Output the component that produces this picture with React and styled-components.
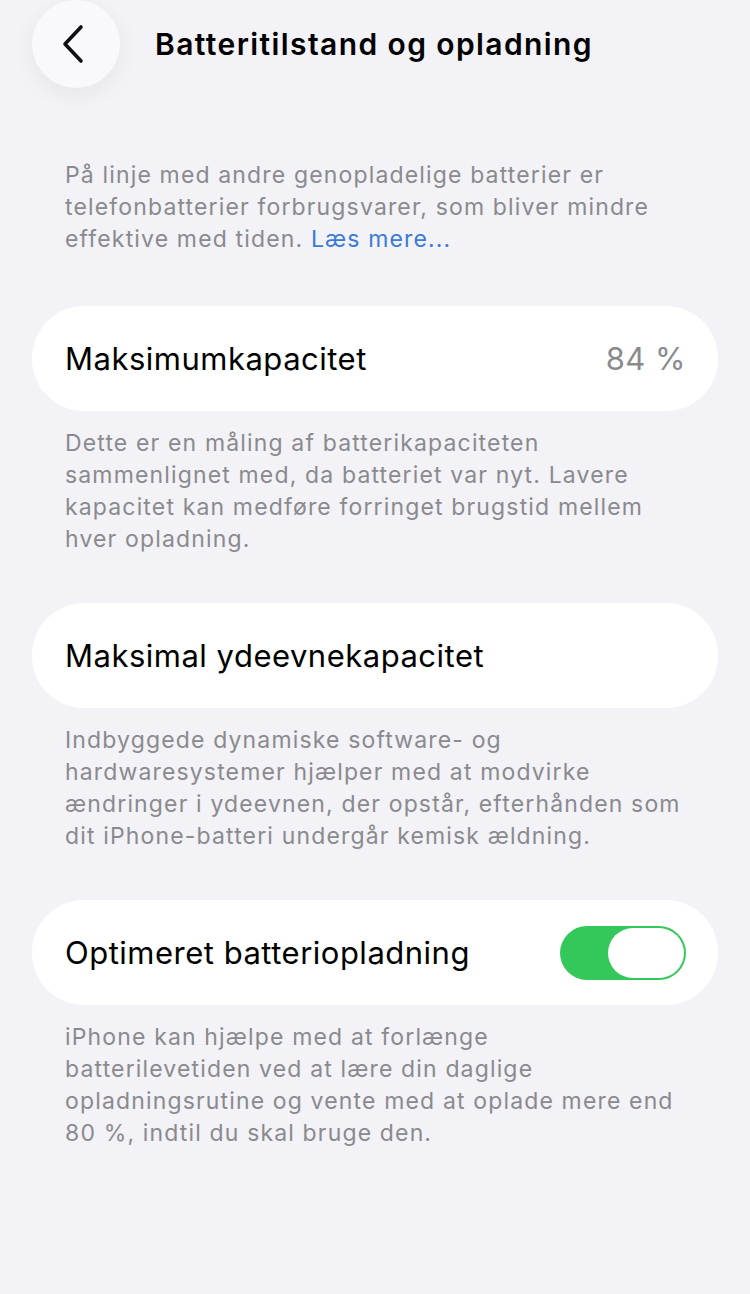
import React from "react";
import styled, { createGlobalStyle } from "styled-components";

const Global = createGlobalStyle`
  html, body { margin: 0; padding: 0; background: #f2f2f7; }
  body { font-family: Inter, "Noto Sans", sans-serif; -webkit-font-smoothing: antialiased; }
`;

const Page = styled.div`
  width: 750px;
  min-height: 1294px;
  background: #f2f2f7;
`;

const Header = styled.header`
  display: flex;
  align-items: center;
  height: 88px;
  padding-left: 32px;
  gap: 35px;
`;

const BackButton = styled.button`
  width: 88px;
  height: 88px;
  border-radius: 50%;
  border: none;
  background: #f9f9fb;
  box-shadow: 0 6px 24px rgba(0, 0, 0, 0.06);
  display: flex;
  align-items: center;
  justify-content: center;
  padding: 0;
`;

const Title = styled.h1`
  margin: 0;
  font-size: 30px;
  font-weight: 600;
  color: #000;
  letter-spacing: 1.4px;
`;

const Content = styled.main`
  display: flex;
  flex-direction: column;
  padding: 71px 32px 0;
`;

const Note = styled.p`
  margin: ${(p) => (p.$footer ? "16px 0 48px" : "0 0 51px")};
  padding: 0 37px 0 33px;
  font-size: 23px;
  line-height: 32px;
  color: #8a8a8e;
  letter-spacing: 1.15px;
`;

const Link = styled.a`
  color: #3a7bd5;
  text-decoration: none;
`;

const Card = styled.div`
  height: 105px;
  border-radius: 52px;
  background: #fff;
  display: flex;
  align-items: center;
  justify-content: space-between;
  padding: 0 32px 0 33px;
`;

const Label = styled.span`
  font-size: 31px;
  color: #000;
  letter-spacing: 0.5px;
`;

const Value = styled.span`
  font-size: 31px;
  color: #8a8a8e;
  letter-spacing: 0.5px;
`;

const Toggle = styled.div`
  width: 126px;
  height: 54px;
  border-radius: 27px;
  background: #34c759;
  display: flex;
  align-items: center;
  justify-content: flex-end;
  padding: 0 2px;
  box-sizing: border-box;
`;

const Knob = styled.div`
  width: 76px;
  height: 50px;
  border-radius: 25px;
  background: #fff;
`;

export default function App() {
  return (
    <Page>
      <Global />
      <Header>
        <BackButton aria-label="Tilbage">
          <svg width="30" height="40" viewBox="0 0 30 40">
            <path d="M20 3 L4 20 L20 37" fill="none" stroke="#111" strokeWidth="3.6" strokeLinecap="round" strokeLinejoin="round" />
          </svg>
        </BackButton>
        <Title>Batteritilstand og opladning</Title>
      </Header>
      <Content>
        <Note>
          På linje med andre genopladelige batterier er telefonbatterier forbrugsvarer, som bliver mindre effektive med tiden. <Link href="#">Læs mere...</Link>
        </Note>
        <Card>
          <Label>Maksimumkapacitet</Label>
          <Value>84 %</Value>
        </Card>
        <Note $footer>
          Dette er en måling af batterikapaciteten sammenlignet med, da batteriet var nyt. Lavere kapacitet kan medføre forringet brugstid mellem hver opladning.
        </Note>
        <Card>
          <Label>Maksimal ydeevnekapacitet</Label>
        </Card>
        <Note $footer>
          Indbyggede dynamiske software- og hardwaresystemer hjælper med at modvirke ændringer i ydeevnen, der opstår, efterhånden som dit iPhone-batteri undergår kemisk ældning.
        </Note>
        <Card>
          <Label>Optimeret batteriopladning</Label>
          <Toggle>
            <Knob />
          </Toggle>
        </Card>
        <Note $footer>
          iPhone kan hjælpe med at forlænge batterilevetiden ved at lære din daglige opladningsrutine og vente med at oplade mere end 80 %, indtil du skal bruge den.
        </Note>
      </Content>
    </Page>
  );
}
